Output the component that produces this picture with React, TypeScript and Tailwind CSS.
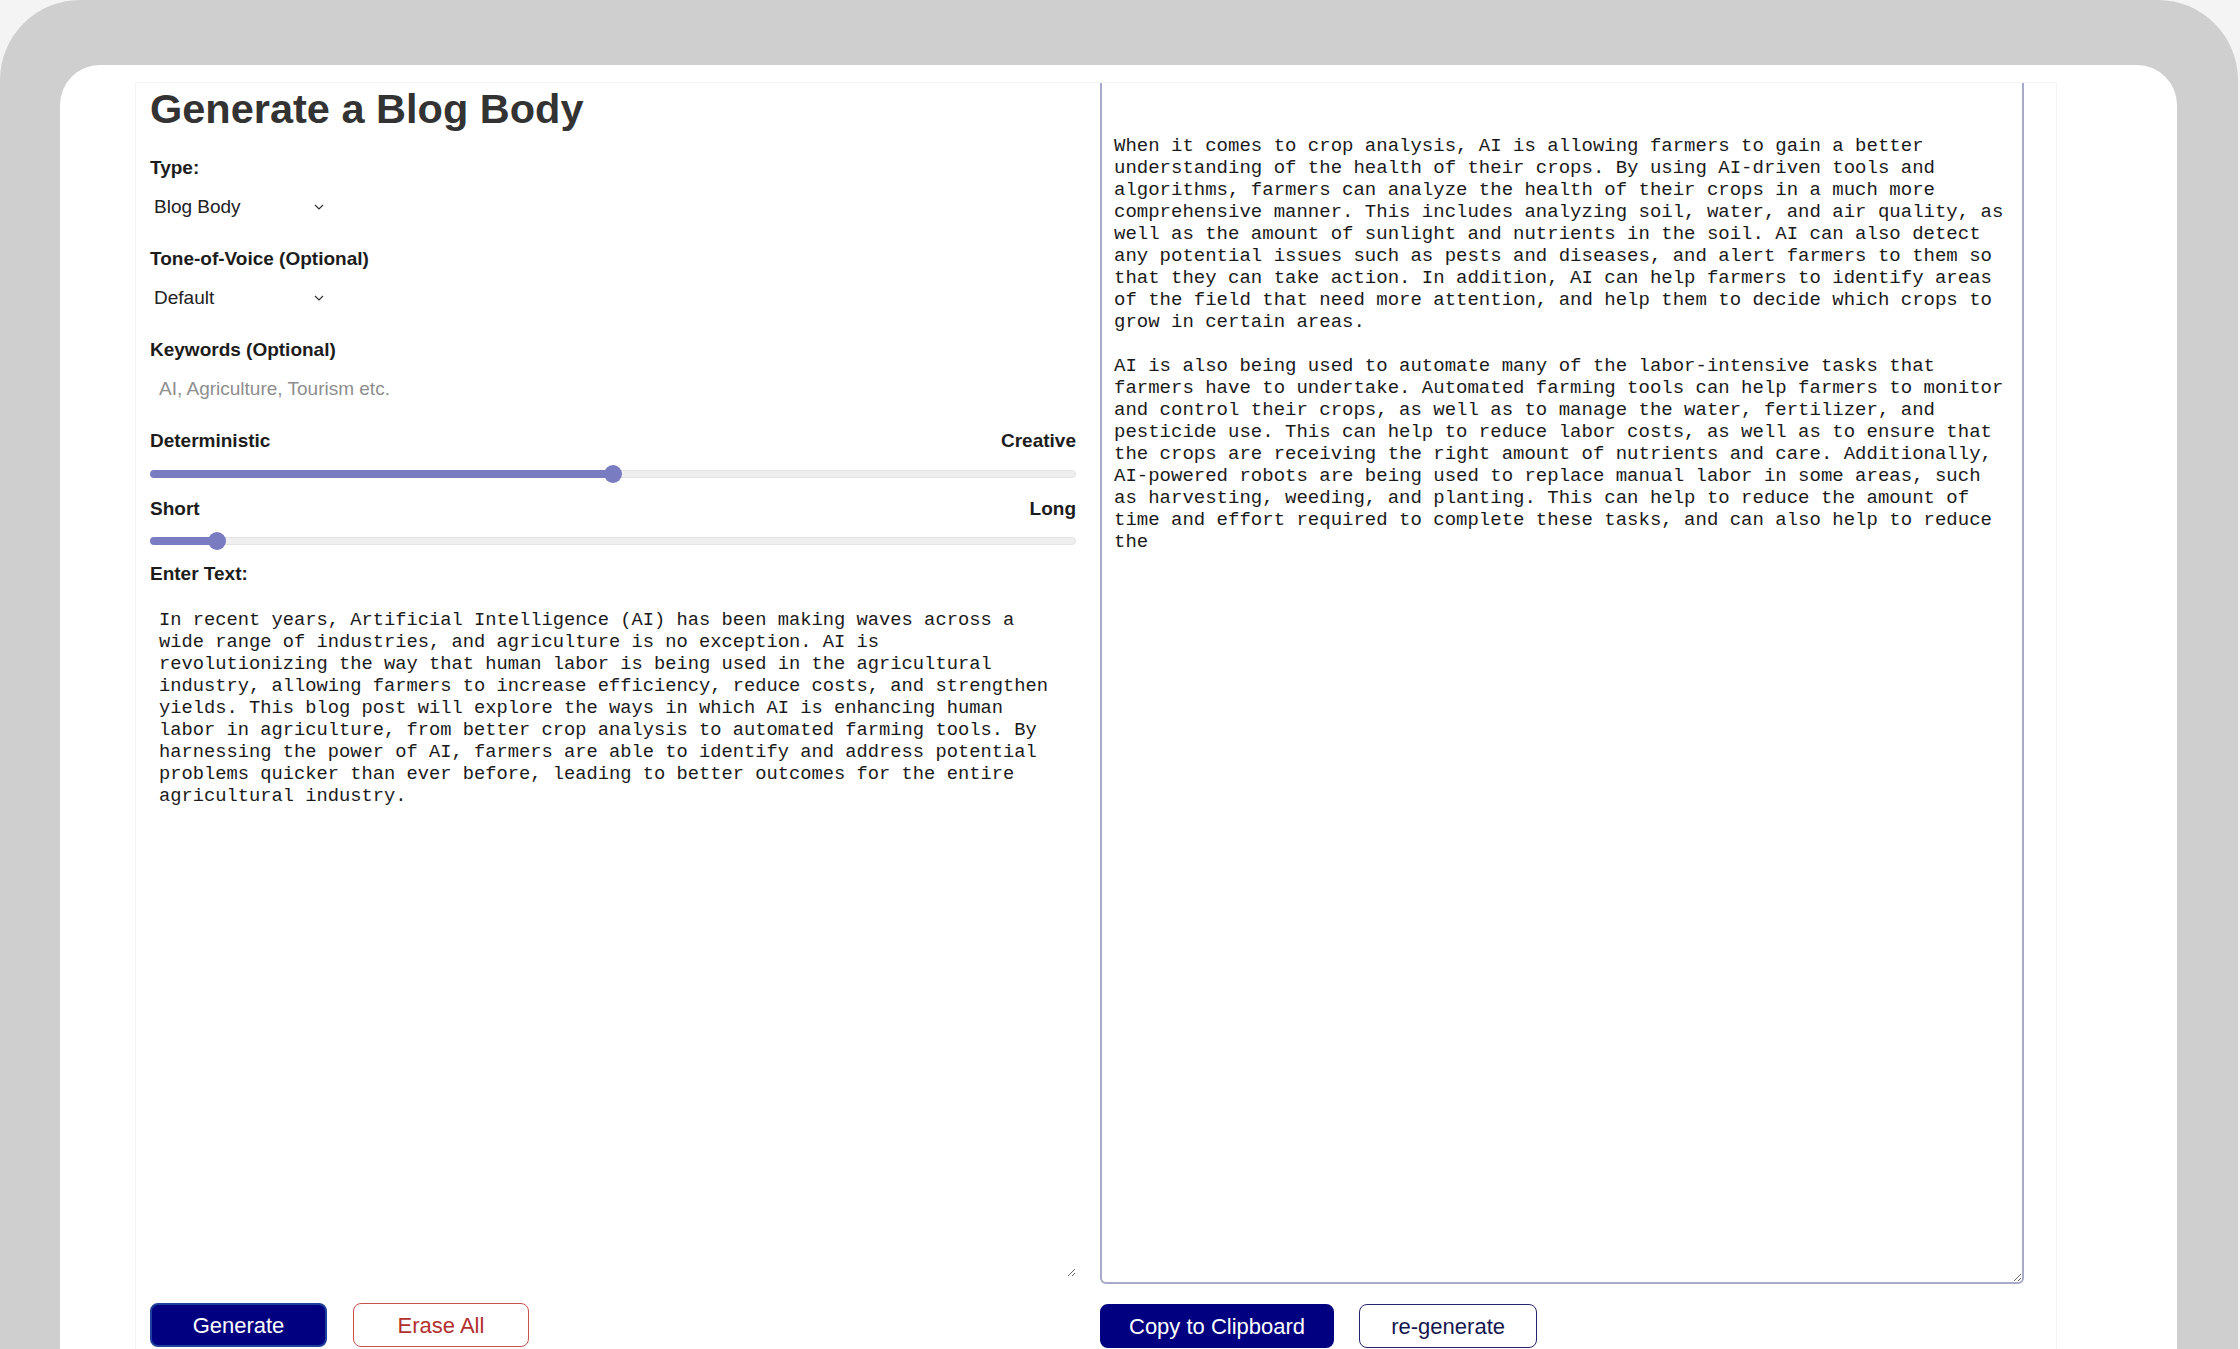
import React from "react";

const inputText = `In recent years, Artificial Intelligence (AI) has been making waves across a
wide range of industries, and agriculture is no exception. AI is
revolutionizing the way that human labor is being used in the agricultural
industry, allowing farmers to increase efficiency, reduce costs, and strengthen
yields. This blog post will explore the ways in which AI is enhancing human
labor in agriculture, from better crop analysis to automated farming tools. By
harnessing the power of AI, farmers are able to identify and address potential
problems quicker than ever before, leading to better outcomes for the entire
agricultural industry.`;

const outputText = `When it comes to crop analysis, AI is allowing farmers to gain a better
understanding of the health of their crops. By using AI-driven tools and
algorithms, farmers can analyze the health of their crops in a much more
comprehensive manner. This includes analyzing soil, water, and air quality, as
well as the amount of sunlight and nutrients in the soil. AI can also detect
any potential issues such as pests and diseases, and alert farmers to them so
that they can take action. In addition, AI can help farmers to identify areas
of the field that need more attention, and help them to decide which crops to
grow in certain areas.

AI is also being used to automate many of the labor-intensive tasks that
farmers have to undertake. Automated farming tools can help farmers to monitor
and control their crops, as well as to manage the water, fertilizer, and
pesticide use. This can help to reduce labor costs, as well as to ensure that
the crops are receiving the right amount of nutrients and care. Additionally,
AI-powered robots are being used to replace manual labor in some areas, such
as harvesting, weeding, and planting. This can help to reduce the amount of
time and effort required to complete these tasks, and can also help to reduce
the`;

function Chevron() {
  return (
    <svg width="10" height="6" viewBox="0 0 10 6" className="pointer-events-none absolute right-[6px] top-[17px]">
      <polyline points="1,1 5,5 9,1" fill="none" stroke="#333" strokeWidth="1.2" />
    </svg>
  );
}

function Select({ value }: { value: string }) {
  return (
    <div className="relative mt-[7px] h-[40px] w-[180px]">
      <select
        defaultValue={value}
        className="h-full w-full appearance-none bg-transparent pl-[4px] text-[19px] text-[#222] outline-none"
      >
        <option>{value}</option>
      </select>
      <Chevron />
    </div>
  );
}

function Label({ children, className = "" }: { children: React.ReactNode; className?: string }) {
  return <div className={`h-[24px] text-[19px] font-bold leading-[24px] text-[#1c1c1c] ${className}`}>{children}</div>;
}

function Slider({ pos, className = "" }: { pos: number; className?: string }) {
  // pos = thumb centre, px from track start
  return (
    <div className={`relative h-[18px] w-full ${className}`}>
      <div className="absolute left-0 right-0 top-[5px] h-[8px] rounded-full border border-[#e3e3e3] bg-[#efefef]" />
      <div className="absolute left-0 top-[5px] h-[8px] rounded-full bg-[#7a7cc2]" style={{ width: pos }} />
      <div className="absolute top-0 h-[18px] w-[18px] rounded-full bg-[#7a7cc2]" style={{ left: pos - 9 }} />
    </div>
  );
}

export default function App() {
  return (
    <div className="h-[1349px] w-[2240px] overflow-hidden bg-[#f4f4f4] font-['Liberation_Sans',Arial,sans-serif]">
      <div className="mr-[2px] h-full rounded-t-[80px] bg-[#cfcfcf] pl-[60px] pr-[61px] pt-[65px]">
        <div className="h-full rounded-t-[40px] bg-white pl-[75px] pr-[120px] pt-[17px]">
          <div className="h-full border border-b-0 border-[#f4f4f4] pl-[14px] pr-[32px]">
            <div className="flex gap-[24px]">
              {/* left column */}
              <div className="flex w-[926px] flex-col">
                <h1 className="mt-[6px] text-[41.5px] font-bold leading-[40px] text-[#333]">Generate a Blog Body</h1>

                <Label className="mt-[27px]">Type:</Label>
                <Select value="Blog Body" />

                <Label className="mt-[20px]">Tone-of-Voice (Optional)</Label>
                <Select value="Default" />

                <Label className="mt-[20px]">Keywords (Optional)</Label>
                <input
                  placeholder="AI, Agriculture, Tourism etc."
                  className="mt-[7px] h-[40px] w-[400px] pl-[9px] text-[19px] text-[#222] outline-none placeholder:text-[#8e8e8e]"
                />

                <div className="mt-[20px] flex justify-between">
                  <Label>Deterministic</Label>
                  <Label>Creative</Label>
                </div>
                <Slider pos={463} className="mt-[12px]" />

                <div className="mt-[14px] flex justify-between">
                  <Label>Short</Label>
                  <Label>Long</Label>
                </div>
                <Slider pos={67} className="mt-[11px]" />

                <Label className="mt-[12px]">Enter Text:</Label>
                <textarea
                  defaultValue={inputText}
                  wrap="off"
                  className="mt-[11px] h-[680px] w-full resize overflow-hidden pl-[9px] pt-[12px] font-['Liberation_Mono',monospace] text-[18.75px] leading-[22px] text-[#1a1a1a] outline-none"
                />

                <div className="mt-[26px] flex gap-[26px]">
                  <button className="h-[44px] w-[177px] rounded-[8px] border-2 border-[#1f3f9c] bg-[#000080] text-[22px] text-white">
                    Generate
                  </button>
                  <button className="h-[44px] w-[176px] rounded-[8px] border-[1.5px] border-[#c7514f] bg-white text-[22px] text-[#b3302f]">
                    Erase All
                  </button>
                </div>
              </div>

              {/* right column */}
              <div className="flex w-[924px] flex-col">
                <textarea
                  defaultValue={outputText}
                  wrap="off"
                  className="h-[1201px] w-full resize overflow-hidden rounded-b-[6px] border-2 border-t-0 border-[#a9a9c9] pl-[12px] pt-[52px] font-['Liberation_Mono',monospace] text-[19px] leading-[22px] text-[#1a1a1a] outline-none"
                />
                <div className="mt-[20px] flex gap-[25px]">
                  <button className="h-[44px] rounded-[8px] border-2 border-[#000080] bg-[#000080] px-[27px] text-[22px] text-white">
                    Copy to Clipboard
                  </button>
                  <button className="h-[44px] w-[178px] rounded-[8px] border-[1.5px] border-[#25256e] bg-white text-[22px] text-[#16164f]">
                    re-generate
                  </button>
                </div>
              </div>
            </div>
          </div>
        </div>
      </div>
    </div>
  );
}
